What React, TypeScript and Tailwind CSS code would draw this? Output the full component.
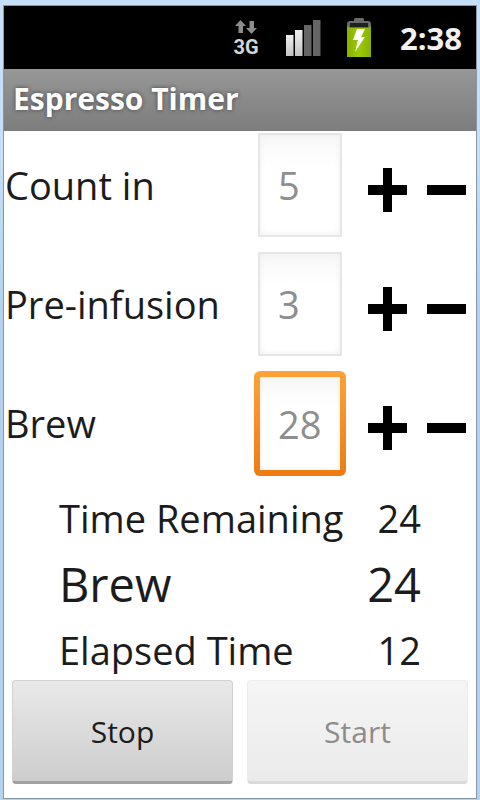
import { useState } from "react";

interface Step {
  id: string;
  name: string;
  seconds: number;
}

const initialSteps: Step[] = [
  { id: "count-in", name: "Count in", seconds: 5 },
  { id: "pre-infusion", name: "Pre-infusion", seconds: 3 },
  { id: "brew", name: "Brew", seconds: 28 },
];

function StatusBar() {
  return (
    <div className="flex h-[63px] items-center justify-end bg-black pr-[14px]">
      <div className="mr-[27px] flex w-6 flex-col items-center">
        <svg width="22" height="14" viewBox="0 0 22 14" fill="#8c8c8c">
          <path d="M5.500 0 11 6H8v7H3.500V6H0z" />
          <path d="M16.500 14 22 8h-3V1h-4.500v7H11z" />
        </svg>
        <span className="mt-1 font-['Roboto',sans-serif] text-[20px] leading-[18px] font-bold text-[#d4d4d4]">3G</span>
      </div>
      <svg className="mr-[25px]" width="36" height="36" viewBox="0 0 36 36">
        <defs>
          <linearGradient id="bar" x1="0" y1="0" x2="0" y2="1">
            <stop offset="0" stopColor="#eeeeee" />
            <stop offset="1" stopColor="#c4c4c4" />
          </linearGradient>
        </defs>
        <rect x="1" y="15" width="7.500" height="21" fill="url(#bar)" />
        <rect x="10" y="10" width="7.500" height="26" fill="url(#bar)" />
        <rect x="19" y="5" width="7.500" height="31" fill="#666" />
        <rect x="28" y="0" width="7.500" height="36" fill="#666" />
      </svg>
      <svg className="mr-[28px]" width="26" height="40" viewBox="0 0 26 40">
        <defs>
          <linearGradient id="cell" x1="0" y1="0" x2="1" y2="0">
            <stop offset="0" stopColor="#86b000" />
            <stop offset="0.500" stopColor="#9ccb08" />
            <stop offset="1" stopColor="#86b000" />
          </linearGradient>
        </defs>
        <path d="M9 0h8q1 0 1 2v1h4q3 0 3 3v4H1V6q0-3 3-3h4V2q0-2 1-2z" fill="#6b6b6b" />
        <path d="M4 5h18v4H4z" fill="#202020" />
        <path d="M1 8l3 2h18l3-2v31H1z" fill="url(#cell)" />
        <path d="M11 11h8l-4 8h4L9 34l3-12H7z" fill="#fff" />
      </svg>
      <span className="text-[31px] leading-10 font-bold text-[#f2f2f2]">2:38</span>
    </div>
  );
}

export default function App() {
  const [steps, setSteps] = useState(initialSteps);

  const change = (id: string, seconds: number) => {
    setSteps(steps.map((s) => (s.id === id ? { ...s, seconds: Math.max(0, seconds) } : s)));
  };

  return (
    <div className="min-h-screen bg-linear-to-b from-[#c6def6] from-20% via-[#b3d1ee] via-40% to-[#b5d3ef] px-[3px] pt-[5px] pb-[2px] font-['Open_Sans',sans-serif] text-[#1c1c1c]">
      <div className="border border-[#8598aa] bg-white">
        <StatusBar />
        <h1 className="h-[62px] bg-linear-to-b from-[#979797] to-[#7d7d7d] pl-[9px] text-[30px] leading-[60px] font-bold text-white [text-shadow:0_0_4px_#444]">
          Espresso Timer
        </h1>

        <div className="pt-[2px]">
          {steps.map((step) => (
            <div key={step.id} className="flex h-[119px] items-start pr-[10px]">
              <label htmlFor={step.id} className="flex-1 pl-px text-[38px] leading-[104px]">
                {step.name}
              </label>
              <div
                className={
                  step.id === "brew"
                    ? "h-[105px] w-[92px] rounded-md bg-linear-to-b from-[#fda236] to-[#ee7b10] p-[6px]"
                    : "mr-1 h-[104px] w-[84px] border-2 border-[#e6e6e6]"
                }
              >
                <input
                  id={step.id}
                  type="text"
                  inputMode="numeric"
                  value={step.seconds}
                  onChange={(e) => change(step.id, Number(e.target.value) || 0)}
                  className="block h-full w-full bg-linear-to-b from-[#f7f7f7] to-white to-30% pl-[18px] text-[38px] text-[#8e8e8e] shadow-[inset_0_0_6px_#eee] outline-none"
                />
              </div>
              <button
                type="button"
                aria-label={`Increase ${step.name}`}
                onClick={() => change(step.id, step.seconds + 1)}
                className="ml-[22px] flex h-[114px] w-[39px] items-center"
              >
                <svg width="39" height="44" viewBox="0 0 39 44">
                  <path d="M15 0h9v17h15v10H24v17h-9V27H0V17h15z" />
                </svg>
              </button>
              <button
                type="button"
                aria-label={`Decrease ${step.name}`}
                onClick={() => change(step.id, step.seconds - 1)}
                className="ml-5 flex h-[114px] w-[39px] items-center"
              >
                <svg width="39" height="10" viewBox="0 0 39 10">
                  <path d="M0 0h39v10H0z" />
                </svg>
              </button>
            </div>
          ))}
        </div>

        <dl className="pr-[55px] pl-[55px]">
          <div className="flex justify-between text-[38px] leading-[56px]">
            <dt>Time Remaining</dt>
            <dd>24</dd>
          </div>
          <div className="flex justify-between text-[47px] leading-[76px]">
            <dt>Brew</dt>
            <dd>24</dd>
          </div>
          <div className="flex justify-between pb-[2px] text-[38px] leading-[56px]">
            <dt>Elapsed Time</dt>
            <dd>12</dd>
          </div>
        </dl>

        <div className="grid grid-cols-2 gap-[14px] px-2 pb-[14px]">
          <button
            type="button"
            className="h-[104px] rounded-sm border border-b-3 border-[#d2d2d2] border-b-[#a2a2a2] bg-linear-to-b from-[#e9e9e9] to-[#cdcdcd] text-[30px]"
          >
            Stop
          </button>
          <button
            type="button"
            disabled
            className="h-[104px] rounded-sm border border-b-3 border-[#ececec] border-b-[#dadada] bg-linear-to-b from-[#f5f5f5] to-[#ebebeb] text-[30px] text-[#8c8c8c]"
          >
            Start
          </button>
        </div>
      </div>
    </div>
  );
}
